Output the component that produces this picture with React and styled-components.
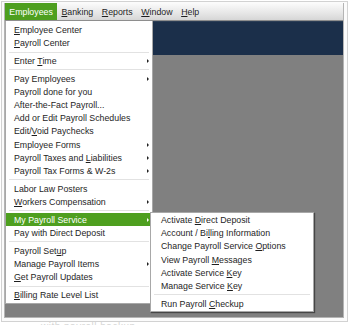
import styled, { createGlobalStyle } from "styled-components";

const GlobalStyle = createGlobalStyle`
  html, body {
    margin: 0;
    padding: 0;
    background: #fff;
    overflow: hidden;
    font-family: "Liberation Sans", Arial, sans-serif;
  }
`;

const Page = styled.div`
  width: 351px;
  height: 325px;
  overflow: hidden;
  padding: 1px 0 0 1px;
  box-sizing: border-box;
`;

const Frame = styled.div`
  width: 347px;
  box-sizing: border-box;
  border: 1px solid #d2d2d2;
  padding: 1px 3px 3px 2px;
  background: #fbfbfb;
`;

const Window = styled.div`
  height: 314px;
  display: flex;
  flex-direction: column;
  border: 1px solid #b4b4b4;
  border-top: 0;
  background: #808080;
`;

const MenuBar = styled.div`
  height: 17px;
  display: flex;
  align-items: stretch;
  background: linear-gradient(#fbfbfb, #e6e6e6 60%, #d6d6d6);
  border-bottom: 1px solid #8e8e8e;
  font-size: 8.8px;
  color: #1e1e1e;
`;

const BarItem = styled.div`
  display: flex;
  align-items: center;
  padding: 0 4.3px;
  background: ${p => (p.$active ? "#4e9f1f" : "transparent")};
  color: ${p => (p.$active ? "#fff" : "#1e1e1e")};

  u {
    text-decoration: ${p => (p.$active ? "none" : "underline")};
  }
`;

const Workspace = styled.div`
  position: relative;
  flex: 1;
  display: flex;
  flex-direction: column;
`;

const NavyBand = styled.div`
  height: 34px;
  background: #1b2f4a;
  border-top: 1px solid #2b3d55;
  box-sizing: border-box;
`;

const GrayFill = styled.div`
  flex: 1;
  background: #808080;
`;

const Menu = styled.div`
  position: absolute;
  left: 0;
  top: 0;
  width: 148px;
  box-sizing: border-box;
  background: #fff;
  border: 1px solid #a8a8a8;
  border-top: 0;
  padding: 2.4px 0 1.2px;
  font-size: 8.8px;
  color: #1e1e1e;
`;

const SubMenu = styled(Menu)`
  left: 145px;
  top: 191px;
  width: 164px;
  border-top: 1px solid #a8a8a8;
  padding: 0.4px 0 1.2px;
  box-shadow: 1px 1px 1px rgba(0, 0, 0, 0.45);
`;

const Item = styled.div`
  height: 13.2px;
  display: flex;
  align-items: center;
  padding: 0 3px 0 ${p => (p.$sub ? "10px" : "8px")};
  margin: 0 ${p => (p.$active ? "0" : "0")};
  background: ${p => (p.$active ? "#4e9f1f" : "transparent")};
  color: ${p => (p.$active ? "#fff" : "#1e1e1e")};
  white-space: nowrap;
`;

const Arrow = styled.span`
  margin-left: auto;
  width: 0;
  height: 0;
  border-top: 2px solid transparent;
  border-bottom: 2px solid transparent;
  border-left: 2.5px solid ${p => (p.$light ? "#fff" : "#222")};
`;

const Separator = styled.div`
  height: 4.6px;
  display: flex;
  align-items: center;
  padding: 0 3px 0 3px;

  &::after {
    content: "";
    flex: 1;
    height: 1px;
    background: #e2e2e2;
  }
`;

const Ghost = styled.div`
  font-size: 10px;
  color: #d6d6d6;
  padding-left: 40px;
  margin-top: -1px;
  letter-spacing: 0.5px;
`;

const K = ({ children }) => <u>{children}</u>;

const mainMenu = [
  { t: <><K>E</K>mployee Center</> },
  { t: <><K>P</K>ayroll Center</> },
  "sep",
  { t: <>Enter <K>T</K>ime</>, arrow: true },
  "sep",
  { t: <>Pay Employees</>, arrow: true },
  { t: <>Payroll done for you</> },
  { t: <>After-the-Fact Payroll...</> },
  { t: <>Add or Edit Payroll Schedules</> },
  { t: <>Edit/<K>V</K>oid Paychecks</> },
  { t: <>Employee Forms</>, arrow: true },
  { t: <>Payroll Taxes and <K>L</K>iabilities</>, arrow: true },
  { t: <>Payroll Tax Forms &amp; W-2s</>, arrow: true },
  "sep",
  { t: <>Labor Law Posters</> },
  { t: <><K>W</K>orkers Compensation</>, arrow: true },
  "sep",
  { t: <>My Payroll Service</>, arrow: true, active: true },
  { t: <>Pay with Direct Deposit</> },
  "sep",
  { t: <>Payroll Set<K>u</K>p</> },
  { t: <>Manage Payroll Items</>, arrow: true },
  { t: <><K>G</K>et Payroll Updates</> },
  "sep",
  { t: <><K>B</K>illing Rate Level List</> },
];

const serviceMenu = [
  { t: <>Activate <K>D</K>irect Deposit</> },
  { t: <>Account / Bi<K>l</K>ling Information</> },
  { t: <>Change Payroll Service <K>O</K>ptions</> },
  { t: <>View Payroll <K>M</K>essages</> },
  { t: <>Activate Service <K>K</K>ey</> },
  { t: <>Manage Service <K>K</K>ey</> },
  "sep",
  { t: <>Run Payroll <K>C</K>heckup</> },
];

const renderItems = (items, sub) =>
  items.map((it, i) =>
    it === "sep" ? (
      <Separator key={i} />
    ) : (
      <Item key={i} $active={it.active} $sub={sub}>
        <span>{it.t}</span>
        {it.arrow && <Arrow $light={it.active} />}
      </Item>
    )
  );

export default function App() {
  return (
    <Page>
      <GlobalStyle />
      <Frame>
        <Window>
          <MenuBar>
            <BarItem $active><span><u>E</u>mployees</span></BarItem>
            <BarItem><span><u>B</u>anking</span></BarItem>
            <BarItem><span><u>R</u>eports</span></BarItem>
            <BarItem><span><u>W</u>indow</span></BarItem>
            <BarItem><span><u>H</u>elp</span></BarItem>
          </MenuBar>
          <Workspace>
            <NavyBand />
            <GrayFill />
            <Menu>{renderItems(mainMenu, false)}</Menu>
            <SubMenu>{renderItems(serviceMenu, true)}</SubMenu>
          </Workspace>
        </Window>
      </Frame>
      <Ghost>with payroll backup</Ghost>
    </Page>
  );
}
